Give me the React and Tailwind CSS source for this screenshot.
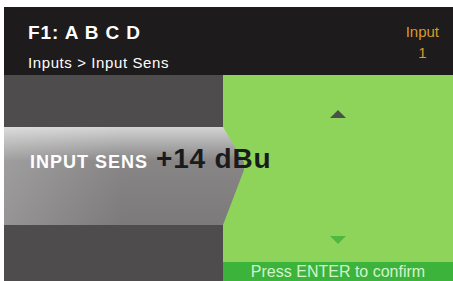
const App = () => {
    return (
        <div className="w-[453px] h-[281px] bg-white pt-[7px] pl-[4px] overflow-hidden" style={{ fontFamily: '"Liberation Sans", Arial, sans-serif' }}>
            <div className="h-[274px] flex flex-col">
                {/* header */}
                <div className="h-[68px] bg-[#1e1b1c] flex justify-between pl-[24px] pr-[14px]">
                    <div className="flex flex-col">
                        <div className="mt-[16px] text-white font-bold text-[19px] leading-[19px] tracking-[0.9px]">F1: A B C D</div>
                        <div className="mt-[13px] text-white text-[15px] leading-[16px] tracking-[0.6px]">Inputs &gt; Input Sens</div>
                    </div>
                    <div className="flex flex-col items-center mt-[14px] text-[#d99a2b] text-[15px] leading-[21px]">
                        <span>Input</span>
                        <span>1</span>
                    </div>
                </div>

                <div className="flex flex-1">
                    {/* left gray column */}
                    <div className="w-[219px] flex flex-col relative z-10">
                        <div className="h-[52px] bg-[#4f4c4d]" />
                        <div className="h-[98px] relative">
                            <div className="absolute inset-y-0 left-0 w-[241px] bg-gradient-to-b from-[#d4d4d4] via-[#878586] via-35% to-[#7c7a7b] [clip-path:polygon(0_0,219px_0,240px_36%,240px_44%,219px_100%,0_100%)]" />
                            <div className="absolute inset-y-0 left-0 w-[120px] bg-gradient-to-r from-white/20 to-transparent" />
                            <div className="relative flex items-baseline gap-[8px] pl-[26px] pt-[11px] whitespace-nowrap">
                                <span className="text-white font-bold text-[18px] tracking-[1px]">INPUT SENS</span>
                                <span className="text-[#1b1b1b] font-bold text-[28px] tracking-[0.8px]">+14 dBu</span>
                            </div>
                        </div>
                        <div className="flex-1 bg-[#4f4c4d]" />
                    </div>

                    {/* green panel */}
                    <div className="flex-1 bg-[#8ed45b] flex flex-col">
                        <div className="flex-1 flex flex-col items-center justify-between pt-[35px] pb-[18px]">
                            <svg width="16" height="8" viewBox="0 0 16 8"><polygon points="8,0 16,8 0,8" fill="#4a5248" /></svg>
                            <svg width="16" height="8" viewBox="0 0 16 8"><polygon points="0,0 16,0 8,8" fill="#4fb83f" /></svg>
                        </div>
                        <div className="h-[19px] bg-[#3cb43c] flex items-center justify-center text-[#d4f2cc] text-[16px] leading-[19px]">
                            Press ENTER to confirm
                        </div>
                    </div>
                </div>
            </div>
        </div>
    );
};

export default App;
